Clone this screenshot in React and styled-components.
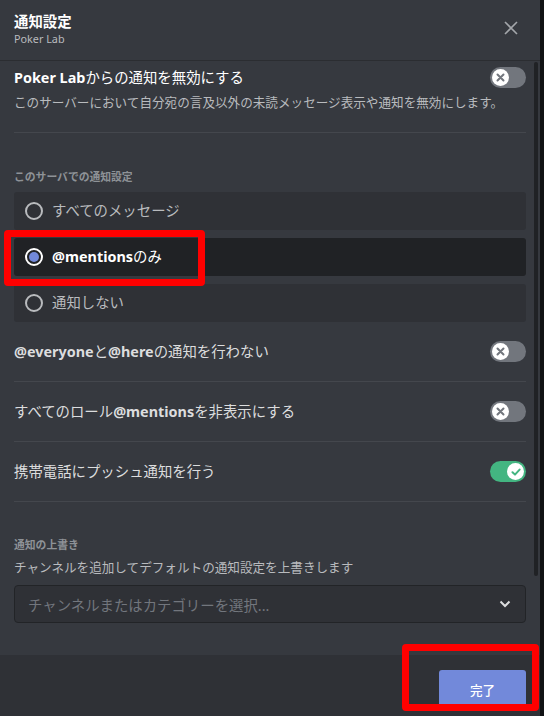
import React, { useState } from "react";
import styled, { createGlobalStyle } from "styled-components";

const GlobalStyle = createGlobalStyle`
  html, body {
    margin: 0;
    padding: 0;
    overflow: hidden;
    background: #111214;
  }
  body {
    font-family: "Noto Sans", "Noto Sans CJK JP", sans-serif;
  }
  * {
    box-sizing: border-box;
  }
`;

const Page = styled.div`
  position: relative;
  width: 544px;
  height: 716px;
`;

const Modal = styled.div`
  width: 540px;
  height: 725px;
  display: flex;
  flex-direction: column;
  background: #36393f;
`;

const Header = styled.div`
  height: 61px;
  padding: 13px 22px 0 14px;
  display: flex;
  justify-content: space-between;
  align-items: flex-start;
  border-bottom: 1px solid #2b2d31;
  flex-shrink: 0;
`;

const HeaderTitle = styled.div`
  color: #fff;
  font-size: 14.4px;
  font-weight: 700;
  line-height: 18px;
`;

const HeaderSub = styled.div`
  color: #b9bbbe;
  font-size: 10.8px;
  line-height: 15px;
`;

const CloseButton = styled.button`
  margin-top: 8px;
  padding: 0;
  border: none;
  background: none;
  display: flex;
  cursor: pointer;
`;

const Body = styled.div`
  position: relative;
  flex: 1;
  overflow: hidden;
  padding: 6px 14px 0;
`;

const ScrollThumb = styled.div`
  position: absolute;
  top: 1px;
  right: 2px;
  width: 4px;
  height: 514px;
  border-radius: 2px;
  background: #202225;
`;

const TopRow = styled.div`
  height: 21px;
  display: flex;
  align-items: center;
  justify-content: space-between;
`;

const RowTitle = styled.div`
  color: #fff;
  font-size: 14.4px;
  line-height: 21px;
`;

const Strong = styled.span`
  font-weight: 700;
`;

const Desc = styled.div`
  margin-top: 6px;
  color: #b9bbbe;
  font-size: 12.6px;
  line-height: 18px;
  white-space: nowrap;
`;

const Divider = styled.div`
  margin-top: 20px;
  height: 1px;
  background: #44474d;
`;

const SectionLabel = styled.div`
  margin-top: ${p => p.$gap}px;
  color: #8e9297;
  font-size: 10.8px;
  font-weight: 600;
  line-height: 14px;
`;

const RadioGroup = styled.div`
  margin-top: 8px;
  display: flex;
  flex-direction: column;
  gap: 8px;
`;

const Option = styled.div`
  height: 38px;
  padding-left: 11px;
  display: flex;
  align-items: center;
  gap: 9px;
  border-radius: 3px;
  background: ${p => (p.$checked ? "#202225" : "#2f3136")};
  color: ${p => (p.$checked ? "#fff" : "#b9bbbe")};
  font-size: 14.4px;
  line-height: 20px;
  cursor: pointer;
`;

const RadioCircle = styled.span`
  width: 18px;
  height: 18px;
  border-radius: 50%;
  border: 2px solid ${p => (p.$checked ? "#fff" : "#b9bbbe")};
  display: flex;
  align-items: center;
  justify-content: center;
  flex-shrink: 0;
  &::after {
    content: "";
    width: 10px;
    height: 10px;
    border-radius: 50%;
    background: #7289da;
    display: ${p => (p.$checked ? "block" : "none")};
  }
`;

const ToggleRow = styled.div`
  height: 60px;
  display: flex;
  align-items: center;
  justify-content: space-between;
  border-bottom: 1px solid #44474d;
  color: #dcddde;
  font-size: 14.4px;
  line-height: 20px;
`;

const Note = styled.div`
  margin-top: 7px;
  color: #b9bbbe;
  font-size: 12.6px;
  line-height: 18px;
`;

const Select = styled.div`
  margin-top: 8px;
  height: 38px;
  padding: 0 14px 0 13px;
  display: flex;
  align-items: center;
  justify-content: space-between;
  border: 1px solid #222427;
  border-radius: 4px;
  background: #2f3136;
  color: #72767d;
  font-size: 14.4px;
`;

const Footer = styled.div`
  height: 70px;
  padding: 15px 14px 0;
  display: flex;
  justify-content: flex-end;
  background: #2f3136;
  flex-shrink: 0;
`;

const DoneButton = styled.button`
  width: 87px;
  height: 38px;
  border: none;
  border-radius: 3px;
  background: #7289da;
  color: #fff;
  font-family: inherit;
  font-size: 12.6px;
  font-weight: 500;
  cursor: pointer;
`;

const Track = styled.div`
  position: relative;
  width: 36px;
  height: 21px;
  border-radius: 11px;
  flex-shrink: 0;
  background: ${p => (p.$on ? "#43b581" : "#72767d")};
  cursor: pointer;
`;

const Knob = styled.div`
  position: absolute;
  top: 2px;
  left: ${p => (p.$on ? "17px" : "2px")};
  width: 17px;
  height: 17px;
  border-radius: 50%;
  background: #fff;
  display: flex;
  align-items: center;
  justify-content: center;
`;

const Highlight = styled.div`
  position: absolute;
  left: ${p => p.$x}px;
  top: ${p => p.$y}px;
  width: ${p => p.$w}px;
  height: ${p => p.$h}px;
  border: 7px solid #ff0000;
  border-radius: 4px;
  pointer-events: none;
`;

const Toggle = ({ on, onClick }) => (
  <Track $on={on} onClick={onClick}>
    <Knob $on={on}>
      {on ? (
        <svg width="10" height="10" viewBox="0 0 10 10">
          <path d="M1.5 5.2L4 7.6L8.6 2.6" fill="none" stroke="#43b581" strokeWidth="2" strokeLinecap="round" strokeLinejoin="round" />
        </svg>
      ) : (
        <svg width="9" height="9" viewBox="0 0 9 9">
          <path d="M1.5 1.5L7.5 7.5M7.5 1.5L1.5 7.5" stroke="#72767d" strokeWidth="2" strokeLinecap="round" />
        </svg>
      )}
    </Knob>
  </Track>
);

const OPTIONS = [
  { id: "all", label: "すべてのメッセージ" },
  { id: "mentions", label: <><Strong>@mentions</Strong>のみ</> },
  { id: "none", label: "通知しない" },
];

const App = () => {
  const [level, setLevel] = useState("mentions");
  const [muted, setMuted] = useState(false);
  const [noEveryone, setNoEveryone] = useState(false);
  const [noRoles, setNoRoles] = useState(false);
  const [push, setPush] = useState(true);

  return (
    <>
      <GlobalStyle />
      <Page>
        <Modal>
          <Header>
            <div>
              <HeaderTitle>通知設定</HeaderTitle>
              <HeaderSub>Poker Lab</HeaderSub>
            </div>
            <CloseButton aria-label="閉じる">
              <svg width="14" height="14" viewBox="0 0 14 14">
                <path d="M1 1L13 13M13 1L1 13" stroke="#a3a6aa" strokeWidth="1.6" />
              </svg>
            </CloseButton>
          </Header>

          <Body>
            <TopRow>
              <RowTitle><Strong>Poker Lab</Strong>からの通知を無効にする</RowTitle>
              <Toggle on={muted} onClick={() => setMuted(!muted)} />
            </TopRow>
            <Desc>このサーバーにおいて自分宛の言及以外の未読メッセージ表示や通知を無効にします。</Desc>
            <Divider />

            <SectionLabel $gap={37}>このサーバでの通知設定</SectionLabel>
            <RadioGroup>
              {OPTIONS.map(o => (
                <Option key={o.id} $checked={level === o.id} onClick={() => setLevel(o.id)}>
                  <RadioCircle $checked={level === o.id} />
                  <span>{o.label}</span>
                </Option>
              ))}
            </RadioGroup>

            <ToggleRow>
              <span><Strong>@everyone</Strong>と<Strong>@here</Strong>の通知を行わない</span>
              <Toggle on={noEveryone} onClick={() => setNoEveryone(!noEveryone)} />
            </ToggleRow>
            <ToggleRow>
              <span>すべてのロール<Strong>@mentions</Strong>を非表示にする</span>
              <Toggle on={noRoles} onClick={() => setNoRoles(!noRoles)} />
            </ToggleRow>
            <ToggleRow>
              <span>携帯電話にプッシュ通知を行う</span>
              <Toggle on={push} onClick={() => setPush(!push)} />
            </ToggleRow>

            <SectionLabel $gap={36}>通知の上書き</SectionLabel>
            <Note>チャンネルを追加してデフォルトの通知設定を上書きします</Note>
            <Select>
              <span>チャンネルまたはカテゴリーを選択...</span>
              <svg width="12" height="8" viewBox="0 0 12 8">
                <path d="M1.5 1.5L6 6L10.5 1.5" fill="none" stroke="#dcddde" strokeWidth="2" />
              </svg>
            </Select>

            <ScrollThumb />
          </Body>

          <Footer>
            <DoneButton>完了</DoneButton>
          </Footer>
        </Modal>

        <Highlight $x={4} $y={230} $w={201} $h={56} />
        <Highlight $x={402} $y={644} $w={137} $h={67} />
      </Page>
    </>
  );
};

export default App;
